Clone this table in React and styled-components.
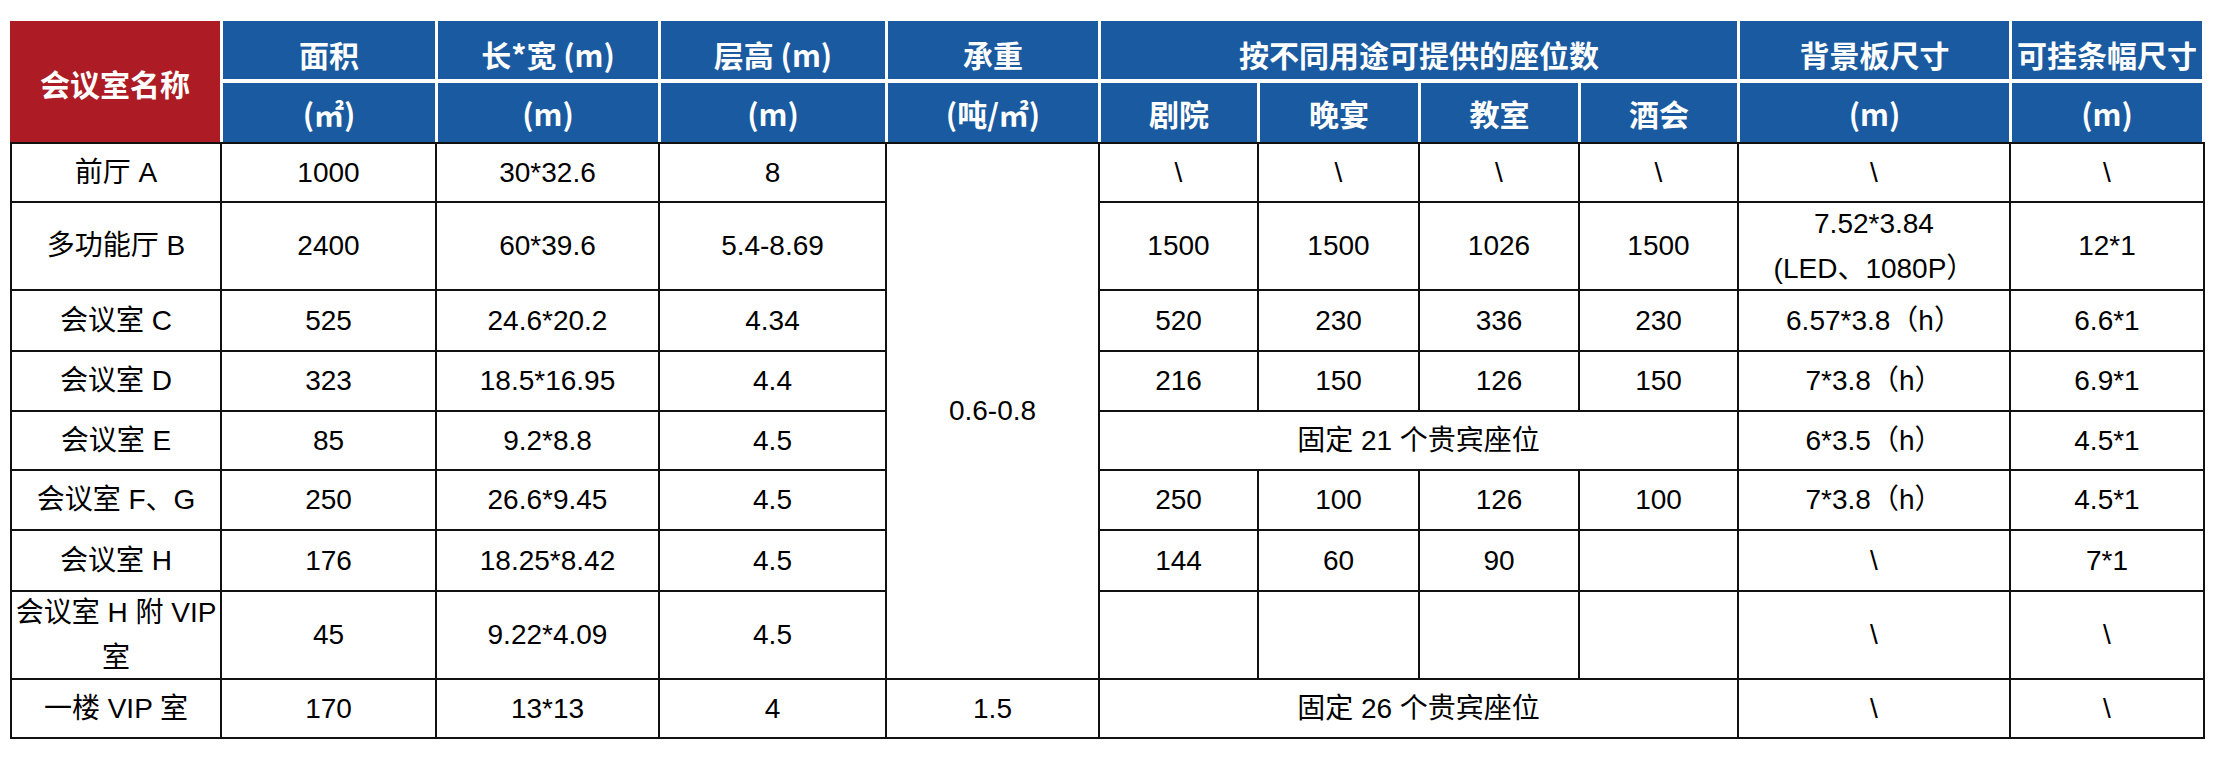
import React from "react";
import styled, { createGlobalStyle } from "styled-components";

const GlobalStyle = createGlobalStyle`
  html, body {
    margin: 0;
    padding: 0;
    background: #ffffff;
  }
  body {
    font-family: "Liberation Sans", "Noto Sans CJK SC", sans-serif;
  }
`;

const Page = styled.div`
  box-sizing: border-box;
  width: 2218px;
  padding: 21px 0 0 10px;
`;

const Table = styled.table`
  border-collapse: separate;
  border-spacing: 0;
  table-layout: fixed;
  width: 2195px;
`;

const Col = styled.col`
  width: ${(p) => p.$w}px;
`;

const HeadRow = styled.tr`
  height: ${(p) => p.$h}px;
`;

const HeadCell = styled.th`
  box-sizing: border-box;
  padding: ${(p) => (p.$top ? "8px 0 0" : p.$accent ? "3px 0 0" : "0")};
  background: ${(p) => (p.$accent ? "#ad1c24" : "#1a5aa0")};
  color: #ffffff;
  font-family: "Noto Sans CJK SC", "Liberation Sans", sans-serif;
  font-size: 30px;
  font-weight: 700;
  line-height: 1.2;
  text-align: center;
  vertical-align: middle;
  white-space: nowrap;
  border-left: ${(p) => (p.$accent ? "0" : "3px solid #ffffff")};
  border-bottom: ${(p) => (p.$top ? "4px solid #ffffff" : "0")};
  &:last-child {
    border-right: 3px solid #ffffff;
  }
`;

const BodyRow = styled.tr`
  height: ${(p) => p.$h}px;
  &:first-child > td {
    border-top: 2px solid #111111;
  }
`;

const Cell = styled.td`
  box-sizing: border-box;
  padding: 0;
  border-left: 2px solid #111111;
  border-bottom: 2px solid #111111;
  font-family: "Liberation Sans", "Noto Sans CJK SC", sans-serif;
  font-size: 28px;
  line-height: 1.2;
  color: #000000;
  text-align: center;
  vertical-align: middle;
  white-space: nowrap;
  &:last-child {
    border-right: 2px solid #111111;
  }
`;

const Stack = styled.div`
  display: flex;
  flex-direction: column;
  align-items: center;
  gap: 11px;
  line-height: 34px;
`;

const widths = [210, 215, 223, 227, 213, 159, 161, 160, 159, 272, 196];

const Lines = ({ lines }) => (
  <Stack>
    {lines.map((l, i) => (
      <span key={i}>{l}</span>
    ))}
  </Stack>
);

const seats = (arr) => arr.map((v, i) => <Cell key={"s" + i}>{v}</Cell>);

export default function App() {
  return (
    <>
      <GlobalStyle />
      <Page>
        <Table>
          <colgroup>
            {widths.map((w, i) => (
              <Col key={i} $w={w} />
            ))}
          </colgroup>
          <thead>
            <HeadRow $h={62}>
              <HeadCell rowSpan={2} $accent>
                会议室名称
              </HeadCell>
              <HeadCell $top>面积</HeadCell>
              <HeadCell $top>长*宽 (m)</HeadCell>
              <HeadCell $top>层高 (m)</HeadCell>
              <HeadCell $top>承重</HeadCell>
              <HeadCell $top colSpan={4}>
                按不同用途可提供的座位数
              </HeadCell>
              <HeadCell $top>背景板尺寸</HeadCell>
              <HeadCell $top>可挂条幅尺寸</HeadCell>
            </HeadRow>
            <HeadRow $h={59}>
              <HeadCell>(㎡)</HeadCell>
              <HeadCell>(m)</HeadCell>
              <HeadCell>(m)</HeadCell>
              <HeadCell>(吨/㎡)</HeadCell>
              <HeadCell>剧院</HeadCell>
              <HeadCell>晚宴</HeadCell>
              <HeadCell>教室</HeadCell>
              <HeadCell>酒会</HeadCell>
              <HeadCell>(m)</HeadCell>
              <HeadCell>(m)</HeadCell>
            </HeadRow>
          </thead>
          <tbody>
            <BodyRow $h={61}>
              <Cell>前厅 A</Cell>
              <Cell>1000</Cell>
              <Cell>30*32.6</Cell>
              <Cell>8</Cell>
              <Cell rowSpan={8}>0.6-0.8</Cell>
              {seats(["\\", "\\", "\\", "\\"])}
              <Cell>\</Cell>
              <Cell>\</Cell>
            </BodyRow>
            <BodyRow $h={88}>
              <Cell>多功能厅 B</Cell>
              <Cell>2400</Cell>
              <Cell>60*39.6</Cell>
              <Cell>5.4-8.69</Cell>
              {seats(["1500", "1500", "1026", "1500"])}
              <Cell>
                <Lines lines={["7.52*3.84", "(LED、1080P）"]} />
              </Cell>
              <Cell>12*1</Cell>
            </BodyRow>
            <BodyRow $h={61}>
              <Cell>会议室 C</Cell>
              <Cell>525</Cell>
              <Cell>24.6*20.2</Cell>
              <Cell>4.34</Cell>
              {seats(["520", "230", "336", "230"])}
              <Cell>6.57*3.8（h）</Cell>
              <Cell>6.6*1</Cell>
            </BodyRow>
            <BodyRow $h={60}>
              <Cell>会议室 D</Cell>
              <Cell>323</Cell>
              <Cell>18.5*16.95</Cell>
              <Cell>4.4</Cell>
              {seats(["216", "150", "126", "150"])}
              <Cell>7*3.8（h）</Cell>
              <Cell>6.9*1</Cell>
            </BodyRow>
            <BodyRow $h={59}>
              <Cell>会议室 E</Cell>
              <Cell>85</Cell>
              <Cell>9.2*8.8</Cell>
              <Cell>4.5</Cell>
              <Cell colSpan={4}>固定 21 个贵宾座位</Cell>
              <Cell>6*3.5（h）</Cell>
              <Cell>4.5*1</Cell>
            </BodyRow>
            <BodyRow $h={60}>
              <Cell>会议室 F、G</Cell>
              <Cell>250</Cell>
              <Cell>26.6*9.45</Cell>
              <Cell>4.5</Cell>
              {seats(["250", "100", "126", "100"])}
              <Cell>7*3.8（h）</Cell>
              <Cell>4.5*1</Cell>
            </BodyRow>
            <BodyRow $h={61}>
              <Cell>会议室 H</Cell>
              <Cell>176</Cell>
              <Cell>18.25*8.42</Cell>
              <Cell>4.5</Cell>
              {seats(["144", "60", "90", ""])}
              <Cell>\</Cell>
              <Cell>7*1</Cell>
            </BodyRow>
            <BodyRow $h={88}>
              <Cell>
                <Lines lines={["会议室 H 附 VIP", "室"]} />
              </Cell>
              <Cell>45</Cell>
              <Cell>9.22*4.09</Cell>
              <Cell>4.5</Cell>
              {seats(["", "", "", ""])}
              <Cell>\</Cell>
              <Cell>\</Cell>
            </BodyRow>
            <BodyRow $h={59}>
              <Cell>一楼 VIP 室</Cell>
              <Cell>170</Cell>
              <Cell>13*13</Cell>
              <Cell>4</Cell>
              <Cell>1.5</Cell>
              <Cell colSpan={4}>固定 26 个贵宾座位</Cell>
              <Cell>\</Cell>
              <Cell>\</Cell>
            </BodyRow>
          </tbody>
        </Table>
      </Page>
    </>
  );
}
